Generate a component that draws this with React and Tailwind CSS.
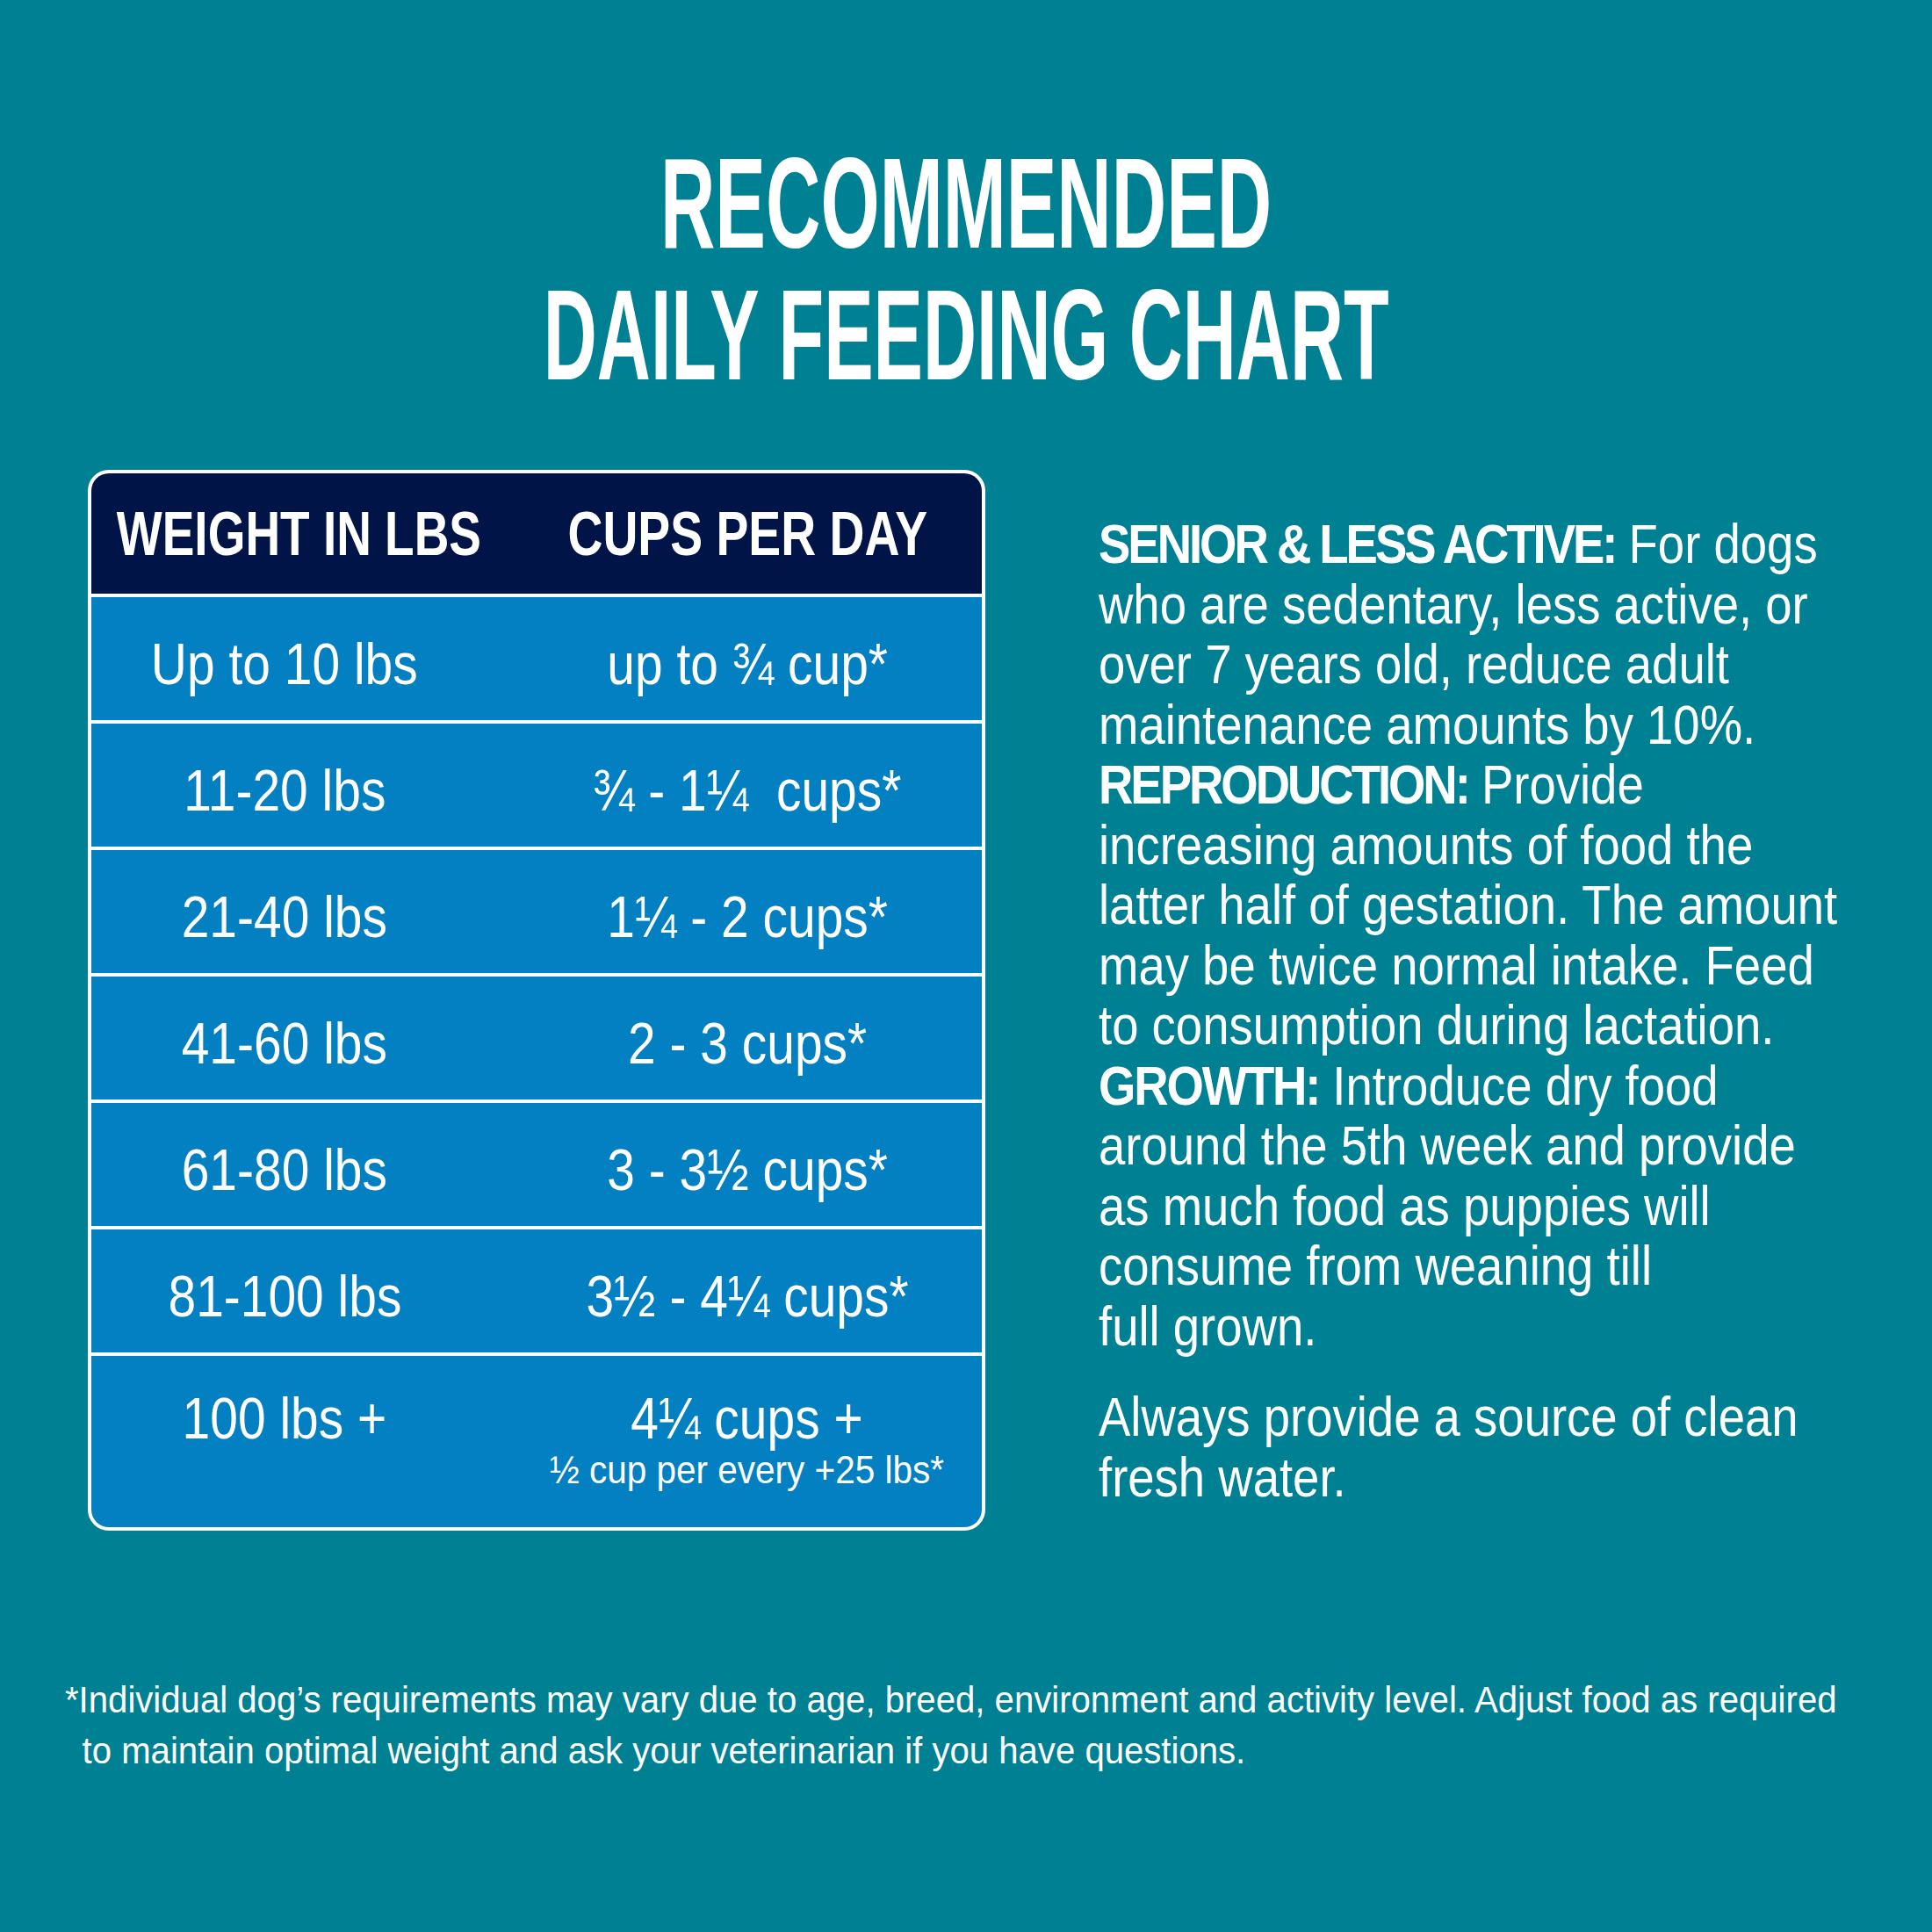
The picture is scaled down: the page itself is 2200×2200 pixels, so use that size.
import React from 'react';

const rows = [
  ['Up to 10 lbs', 'up to ¾ cup*'],
  ['11-20 lbs', '¾ - 1¼  cups*'],
  ['21-40 lbs', '1¼ - 2 cups*'],
  ['41-60 lbs', '2 - 3 cups*'],
  ['61-80 lbs', '3 - 3½ cups*'],
  ['81-100 lbs', '3½ - 4¼ cups*'],
];

function FeedingTable() {
  return (
    <div className="w-[1022px] shrink-0 rounded-[24px] border-4 border-white overflow-hidden bg-white flex flex-col gap-[4px]">
      {/* header */}
      <div className="h-[137px] bg-[#001448] flex items-center font-bold text-[70px] leading-none">
        <div className="w-[440px] pl-[32px] flex justify-center">
          <span className="inline-block whitespace-nowrap scale-x-[0.785]">WEIGHT IN LBS</span>
        </div>
        <div className="flex-1 ml-[40px] flex justify-center">
          <span className="inline-block whitespace-nowrap scale-x-[0.79]">CUPS PER DAY</span>
        </div>
      </div>

      {rows.map(([w, c]) => (
        <div key={w} className="h-[140px] bg-[#0380c1] flex items-center pt-[10px] text-[67px] leading-none">
          <div className="w-[440px] flex justify-center">
            <span className="inline-block whitespace-pre scale-x-[0.85]">{w}</span>
          </div>
          <div className="flex-1 ml-[40px] flex justify-center">
            <span className="inline-block whitespace-pre scale-x-[0.85]">{c}</span>
          </div>
        </div>
      ))}

      <div className="h-[195px] bg-[#0380c1] flex items-start pt-[37px] text-[67px] leading-none">
        <div className="w-[440px] flex justify-center">
          <span className="inline-block whitespace-nowrap scale-x-[0.85]">100 lbs +</span>
        </div>
        <div className="flex-1 ml-[40px] flex flex-col items-center">
          <span className="inline-block whitespace-nowrap scale-x-[0.85]">4¼ cups +</span>
          <span className="inline-block whitespace-nowrap scale-x-[0.9] text-[45px] leading-[48px] mt-[2px]">
            ½ cup per every +25 lbs*
          </span>
        </div>
      </div>
    </div>
  );
}

function Notes() {
  return (
    <div className="mt-[50px] ml-[129px] text-[63px] leading-[68.5px] whitespace-nowrap origin-left scale-x-[0.865]">
      <div><b className="tracking-[-3.5px]">SENIOR &amp; LESS ACTIVE:</b> For dogs</div>
      <div>who are sedentary, less active, or</div>
      <div>over 7 years old, reduce adult</div>
      <div>maintenance amounts by 10%.</div>
      <div><b className="tracking-[-3.5px]">REPRODUCTION:</b> Provide</div>
      <div>increasing amounts of food the</div>
      <div>latter half of gestation. The amount</div>
      <div>may be twice normal intake. Feed</div>
      <div>to consumption during lactation.</div>
      <div><b className="tracking-[-2.5px]">GROWTH:</b> Introduce dry food</div>
      <div>around the 5th week and provide</div>
      <div>as much food as puppies will</div>
      <div>consume from weaning till</div>
      <div>full grown.</div>
      <div className="mt-[35px]">Always provide a source of clean</div>
      <div>fresh water.</div>
    </div>
  );
}

export default function App() {
  return (
    <div className="w-[2200px] h-[2200px] overflow-hidden bg-[#008093] text-white font-['Liberation_Sans',Arial,sans-serif]">
      {/* title */}
      <div className="pt-[156px] flex flex-col items-center font-bold text-[147px] leading-[150px]">
        <span className="inline-block whitespace-nowrap scale-x-[0.588]">RECOMMENDED</span>
        <span className="inline-block whitespace-nowrap scale-x-[0.575]">DAILY FEEDING CHART</span>
      </div>

      <div className="mt-[79px] pl-[100px] flex items-start">
        <FeedingTable />
        <Notes />
      </div>

      <div className="mt-[163px] pl-[74px]">
        <div className="text-[43px] leading-[58px] whitespace-nowrap origin-left scale-x-[0.933]">
          <div>*Individual dog’s requirements may vary due to age, breed, environment and activity level. Adjust food as required</div>
          <div className="pl-[21px]">to maintain optimal weight and ask your veterinarian if you have questions.</div>
        </div>
      </div>
    </div>
  );
}
